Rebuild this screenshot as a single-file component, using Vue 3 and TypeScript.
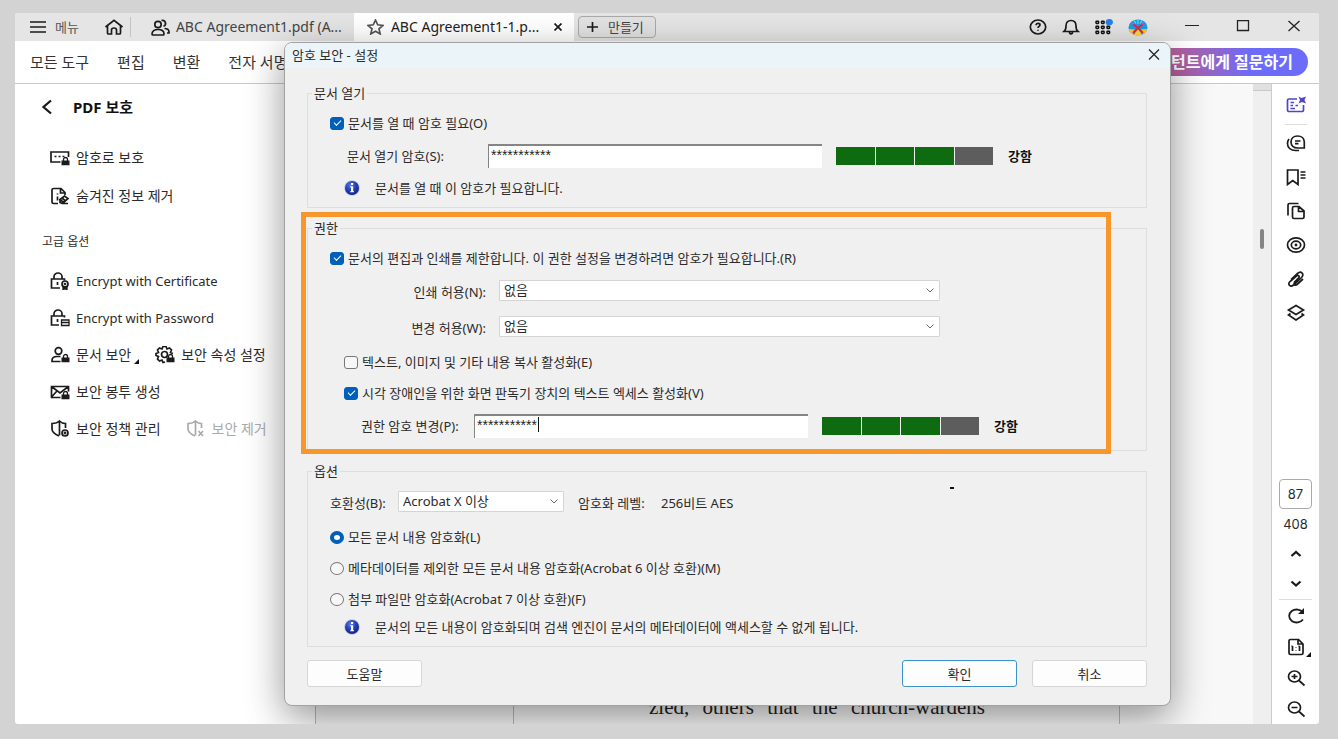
<script setup lang="ts">
import { ref } from 'vue'

interface ToolItem {
  icon: string
  label: string
}

const menus = ['모든 도구', '편집', '변환', '전자 서명']

const basicTools: ToolItem[] = [
  { icon: 'password', label: '암호로 보호' },
  { icon: 'redact', label: '숨겨진 정보 제거' },
]

const railTop: ToolItem[] = [
  { icon: 'comment', label: '댓글' },
  { icon: 'bookmark', label: '책갈피' },
  { icon: 'pages', label: '페이지' },
  { icon: 'target', label: '대상' },
  { icon: 'clip', label: '첨부 파일' },
  { icon: 'layers', label: '레이어' },
]

const railNav: ToolItem[] = [
  { icon: 'up', label: '이전 페이지' },
  { icon: 'down', label: '다음 페이지' },
]

const railView: ToolItem[] = [
  { icon: 'rotate', label: '회전' },
  { icon: 'actual', label: '실제 크기' },
  { icon: 'zoomin', label: '확대' },
  { icon: 'zoomout', label: '축소' },
]

const openRequired = ref(true)
const openPassword = ref('***********')
const restrict = ref(true)
const printing = ref('없음')
const changes = ref('없음')
const copying = ref(false)
const reader = ref(true)
const permPassword = ref('***********')
const compat = ref('Acrobat X 이상')
const scope = ref('all')
const page = ref('87')
const strength = [true, true, true, false]
</script>

<template>
  <div class="desktop">
    <svg class="defs" width="0" height="0" aria-hidden="true">
      <symbol id="lock" viewBox="0 0 8 9">
        <path d="M0 4h8v5H0z" fill="currentColor" stroke="none" />
        <path d="M2 4.500V3a2 2 0 0 1 4 0v1.500" fill="none" stroke="currentColor" stroke-width="1.300" />
      </symbol>
      <symbol id="password" viewBox="0 0 20 18">
        <path d="M10.500 13H1V3h17.500v5" />
        <path d="M4.500 7.500h2M8.500 7.500h2M12.500 7.500h2" />
        <use href="#lock" x="11" y="7.500" width="9" height="9" />
      </symbol>
      <symbol id="redact" viewBox="0 0 20 18">
        <path d="M8 16.500H3.500A1.500 1.500 0 0 1 2 15V3a1.500 1.500 0 0 1 1.500-1.500H11L15 5.500V8M10.500 1.500V6H15" />
        <path d="M7.500 6.500v1M7.500 9.500v4" />
        <path d="M10 12.500l4.500-3.500 3.500 2.500-4.500 4zM12 11l3.500 3M10 12.500v3l2 1h6" />
      </symbol>
      <symbol id="cert" viewBox="0 0 20 18">
        <path d="M10 16H1.500V7H14.500v1.500M4 7V4.500a4 3.500 0 0 1 8 0V7M7.500 10v3" />
        <circle cx="15" cy="12" r="3" /><circle cx="15" cy="12" r="0.500" />
        <path d="M13.200 14.500v3l1.800-1 1.800 1v-3" fill="currentColor" />
      </symbol>
      <symbol id="passdoc" viewBox="0 0 20 18">
        <path d="M9 16H1.500V7H14.500v1.500M4 7V4.500a4 3.500 0 0 1 8 0V7M7.500 10v3" />
        <path d="M11.500 11h7.500v5.500h-7.500zM11.500 13.500h7.500" stroke-width="1.300" />
      </symbol>
      <symbol id="person" viewBox="0 0 20 18">
        <circle cx="8.500" cy="5" r="3.300" />
        <path d="M10.500 10.500H7c-3 0-5 1.500-5 4V15.500h8.500" />
        <use href="#lock" x="11" y="7.500" width="9" height="9" />
      </symbol>
      <symbol id="gear" viewBox="0 0 20 18">
        <path d="M10 16l-2 .500-1-2.500-2.500 1-2-2 1-2.500L1 9.500v-2L3.500 6.500l-1-2.500 2-2L7 3l1-2.500h3L12 3l2.500-1 2 2-1 2.500 2.500 1" />
        <circle cx="9.500" cy="8.500" r="3" />
        <use href="#lock" x="11" y="7.500" width="9" height="9" />
      </symbol>
      <symbol id="envelope" viewBox="0 0 20 18">
        <path d="M10.500 14.500H1.500v-11h17v5M1.500 3.500l8.500 6.500 8.500-6.500M1.500 14l5.500-6" />
        <use href="#lock" x="11" y="7.500" width="9" height="9" />
      </symbol>
      <symbol id="policy" viewBox="0 0 20 18">
        <path d="M9.500 1v14.500M15.500 8V3.500C13 3.500 11 2.500 9.500 1 8 2.500 5 3.500 2 3.500V9c0 3.500 3.500 5.500 7 7" />
        <circle cx="15" cy="13" r="3" /><circle cx="15" cy="13" r="0.600" />
      </symbol>
      <symbol id="unprotect" viewBox="0 0 20 18">
        <path d="M9.500 1v14.500M15.500 8V3.500C13 3.500 11 2.500 9.500 1 8 2.500 5 3.500 2 3.500V9c0 3.500 3.500 5.500 7 7M12.500 11l4.500 5M17 11l-4.500 5" />
      </symbol>

      <symbol id="assist" viewBox="0 0 20 18">
        <path d="M11 3H3a1.500 1.500 0 0 0-1.500 1.500V14A1.500 1.500 0 0 0 3 15.500H16a1.500 1.500 0 0 0 1.500-1.500V9" />
        <path d="M4.500 6.500H8M4.500 9.500H7M4.500 12.500H9M9.500 9.500H12" />
        <path d="M12.500 0.500l3 1.500L20 0.500 18.500 4l1.500 3.500-4-1.500L12.500 7.500 14 4z" fill="currentColor" stroke="none" />
      </symbol>
      <symbol id="comment" viewBox="0 0 20 18">
        <path d="M11.500 2c4 0 6.800 2.500 6.800 6V14h-6.800c-3.800 0-6.500-2.500-6.500-6s2.700-6 6.500-6z" />
        <path d="M3 5C1.800 6.500 1.500 8 1.500 9.500c0 4.500 3.500 7 8 7H13M9 7h5.500M9 9.700h3.500" />
      </symbol>
      <symbol id="bookmark" viewBox="0 0 20 18">
        <path d="M1.500 2h10.500v14.500l-5.200-4-5.300 4zM14.500 4H19.500M14.500 7H19.500M14.500 10H19.500" />
      </symbol>
      <symbol id="pages" viewBox="0 0 20 18">
        <path d="M2 13.500V3A1.500 1.500 0 0 1 3.500 1.500H12.500M13 4.500H8A1.500 1.500 0 0 0 6.500 6V15A1.500 1.500 0 0 0 8 16.500h8.500A1.500 1.500 0 0 0 18 15V9zM12.500 4.500v5h5" />
      </symbol>
      <symbol id="target" viewBox="0 0 20 18">
        <ellipse cx="10" cy="9" rx="8.500" ry="7.200" /><ellipse cx="10" cy="9" rx="4.700" ry="3.800" /><circle cx="10" cy="9" r="0.600" />
      </symbol>
      <symbol id="clip" viewBox="0 0 20 18">
        <path d="M8 12.500l5-5a1.500 1.500 0 0 0-2-2L4 11.500c-3 3 .500 6 3.500 3.500l8-7.500c3.500-3.500-.500-7-4-4L5 9.500M17 9l-6 5.500c-2 1.500-4-.500-2-2.500" />
      </symbol>
      <symbol id="layers" viewBox="0 0 20 18">
        <path d="M10 1.500l7.500 4.500-7.500 4.500L2.500 6zM4.500 9.500l-2 1.500 7.500 5 7.500-5-2-1.500" />
      </symbol>
      <symbol id="up" viewBox="0 0 20 18"><path d="M5.500 11l4.500-4 4.500 4" stroke-width="2.300" /></symbol>
      <symbol id="down" viewBox="0 0 20 18"><path d="M5.500 6.500l4.500 4 4.500-4" stroke-width="2.300" /></symbol>
      <symbol id="rotate" viewBox="0 0 20 18">
        <path d="M17 12.500a7.500 6.500 0 1 1 0-7" stroke-width="1.800" />
        <path d="M18 1v6h-6z" fill="currentColor" stroke="none" />
      </symbol>
      <symbol id="actual" viewBox="0 0 20 18">
        <path d="M12.500 1.500H4.500A1.500 1.500 0 0 0 3 3v12a1.500 1.500 0 0 0 1.500 1.500h11A1.500 1.500 0 0 0 17 15V6zM12 1.500V6h5M6.500 8v5M5.500 8.500l1-.500M13.500 8v5M12.500 8.500l1-.500M10 9v.500M10 12v.500" />
      </symbol>
      <symbol id="zoomin" viewBox="0 0 20 18">
        <ellipse cx="8.500" cy="7.500" rx="6" ry="5.500" /><path d="M13 11.500l5.500 5M5.500 7.500h6M8.500 5v5" />
      </symbol>
      <symbol id="zoomout" viewBox="0 0 20 18">
        <ellipse cx="8.500" cy="7.500" rx="6" ry="5.500" /><path d="M13 11.500l5.500 5M5.500 7.500h6" />
      </symbol>
      <radialGradient id="infoFill" cx="40%" cy="30%" r="75%">
        <stop offset="0" stop-color="#5b7be8" /><stop offset="0.500" stop-color="#2440b8" /><stop offset="1" stop-color="#10207c" />
      </radialGradient>
      <symbol id="info" viewBox="0 0 16 16">
        <circle cx="8" cy="8" r="7.800" fill="#b9c3dc" /><circle cx="8" cy="8" r="7" fill="url(#infoFill)" />
        <path d="M7 3h2.200v2H7zM6.200 6.300h3v5h.800v1H6.200v-1H7V7.300h-.800z" fill="#fff" />
      </symbol>
    </svg>

    <div class="window">
      <header class="titlebar">
        <button class="plain menu" type="button">
          <svg class="icon" width="16" height="12" viewBox="0 0 16 12"><path d="M0 1h16M0 6h16M0 11h16" /></svg>
          메뉴
        </button>
        <button class="plain home" type="button" aria-label="홈">
          <svg class="icon" width="20" height="16" viewBox="0 0 20 16"><path d="M1.500 8L10 1.300 18.500 8M3.500 7v7a1 1 0 0 0 1 1h3v-4a2.500 2 0 0 1 5 0v4h3a1 1 0 0 0 1-1V7" /></svg>
        </button>
        <button class="plain tab" type="button">
          <svg class="icon" width="19" height="17" viewBox="0 0 19 17"><circle cx="7" cy="5.500" r="3.200" /><path d="M7 10.500c-3.500 0-6 1.500-6 4.500 0 .500.300 1 1 1h10c.700 0 1-.500 1-1 0-3-2.500-4.500-6-4.500zM10.500 1.500a3 3 0 1 1 2 5.700M13.500 9.500c2.500 0 4.500 1 4.500 3.500v1h-2" /></svg>
          <span>ABC Agreement1.pdf (A...</span>
        </button>
        <div class="tab active">
          <svg class="icon star" width="17" height="16" viewBox="0 0 17 16"><path d="M8.500 1l2.200 4.800 5.300.600-4 3.500 1.200 5-4.700-2.600-4.700 2.600L5 9.900 1 6.400l5.300-.600z" /></svg>
          <span>ABC Agreement1-1.p...</span>
          <button class="plain tabclose" type="button" aria-label="탭 닫기">
            <svg class="icon" width="8" height="8" viewBox="0 0 8 8"><path d="M.500.500l7 7M7.500.500l-7 7" /></svg>
          </button>
        </div>
        <button class="create" type="button">
          <svg class="icon" width="11" height="10" viewBox="0 0 11 10"><path d="M0 5h11M5.500 0v10" /></svg>
          만들기
        </button>
        <div class="account">
          <button class="plain" type="button" aria-label="도움말">
            <svg class="icon" width="18" height="16" viewBox="0 0 18 16"><ellipse cx="9" cy="8" rx="7.700" ry="7" /><path d="M7 6.300c0-2.600 4-2.300 4-.300 0 1.300-2 1.500-2 3M9 10.800v1" /></svg>
          </button>
          <button class="plain" type="button" aria-label="알림">
            <svg class="icon" width="18" height="16" viewBox="0 0 18 16"><path d="M2 12.500c2-1.500 2-3 2-5.500C4 3.500 6 1.500 9 1.500S14 3.500 14 7c0 2.500 0 4 2 5.500zM7.500 13c0 2.500 3 2.500 3 0" /></svg>
          </button>
          <button class="plain" type="button" aria-label="앱">
            <svg width="18" height="16" viewBox="0 0 18 16"><g fill="none" stroke="#111" stroke-width="1.500"><rect x="1" y="2.200" width="2.600" height="2.200" rx="0.600" /><rect x="6.500" y="2.200" width="2.600" height="2.200" rx="0.600" /><rect x="1" y="7.200" width="2.600" height="2.200" rx="0.600" /><rect x="6.500" y="7.200" width="2.600" height="2.200" rx="0.600" /><rect x="12" y="7.200" width="2.600" height="2.200" rx="0.600" /><rect x="1" y="12.200" width="2.600" height="2.200" rx="0.600" /><rect x="6.500" y="12.200" width="2.600" height="2.200" rx="0.600" /><rect x="12" y="12.200" width="2.600" height="2.200" rx="0.600" /></g><ellipse cx="14.300" cy="3.200" rx="3.600" ry="3.100" fill="#2680eb" /></svg>
          </button>
          <button class="plain" type="button" aria-label="프로필">
            <svg width="20" height="17" viewBox="0 0 20 17"><ellipse cx="10" cy="8.500" rx="9.500" ry="8" fill="#1c9bea" /><path d="M1 10l6 .500L5 15.500C3 14.500 1 12.500 1 10zM19 10l-6 .500 2 5c2-1 4-3 4-5.500z" fill="#ffc928" /><path d="M10 9l-4 7c2 1 6 1 8 0z" fill="#ffd53b" /><path d="M5 5l5 4 5-4M10 9l-5 5M10 9l5 5" fill="none" stroke="#d92b43" stroke-width="2" /><path d="M6 1.500l2 3M10 1v4M14 1.500l-2 3" stroke="#5de0ef" stroke-width="1.200" /><path d="M4.500 4l1.500 1M15.500 4L14 5" stroke="#e04fc0" stroke-width="2" /></svg>
          </button>
        </div>
        <div class="controls">
          <button class="plain" type="button" aria-label="최소화"><svg width="14" height="12" viewBox="0 0 14 12"><path d="M0 5.500h14" stroke="#222" /></svg></button>
          <button class="plain" type="button" aria-label="최대화"><svg width="14" height="12" viewBox="0 0 14 12"><path d="M1.500.500h11v10h-11z" fill="none" stroke="#222" stroke-width="1.300" /></svg></button>
          <button class="plain" type="button" aria-label="닫기"><svg width="14" height="12" viewBox="0 0 14 12"><path d="M1.500 1l11 10M12.500 1l-11 10" stroke="#222" stroke-width="1.300" /></svg></button>
        </div>
      </header>

      <nav class="toolbar">
        <button v-for="m in menus" :key="m" class="plain" type="button">{{ m }}</button>
        <button class="ask" type="button">AI 어시스턴트에게 질문하기</button>
      </nav>

      <div class="body">
        <aside class="tools">
          <h1>
            <button class="plain" type="button" aria-label="뒤로"><svg class="icon" width="12" height="16" viewBox="0 0 12 16"><path d="M10 1.500L2.500 8l7.500 6.500" stroke-width="2.300" /></svg></button>
            PDF 보호
          </h1>
          <div class="list">
            <button v-for="t in basicTools" :key="t.icon" class="plain tool tall" type="button">
              <svg class="icon" width="20" height="18"><use :href="'#' + t.icon" /></svg>{{ t.label }}
            </button>
          </div>
          <h2>고급 옵션</h2>
          <div class="list">
            <button class="plain tool latin" type="button"><svg class="icon" width="20" height="18"><use href="#cert" /></svg>Encrypt with Certificate</button>
            <button class="plain tool latin" type="button"><svg class="icon" width="20" height="18"><use href="#passdoc" /></svg>Encrypt with Password</button>
            <div class="pair">
              <button class="plain tool" type="button">
                <svg class="icon" width="20" height="18"><use href="#person" /></svg>문서 보안
                <svg class="corner" width="5" height="5" viewBox="0 0 5 5"><path d="M5 0v5H0z" /></svg>
              </button>
              <button class="plain tool" type="button"><svg class="icon" width="20" height="18"><use href="#gear" /></svg>보안 속성 설정</button>
            </div>
            <button class="plain tool" type="button"><svg class="icon" width="20" height="18"><use href="#envelope" /></svg>보안 봉투 생성</button>
            <div class="pair wide">
              <button class="plain tool" type="button"><svg class="icon" width="20" height="18"><use href="#policy" /></svg>보안 정책 관리</button>
              <button class="plain tool" type="button" disabled><svg class="icon" width="20" height="18"><use href="#unprotect" /></svg>보안 제거</button>
            </div>
          </div>
        </aside>

        <main class="document">
          <div class="sheet"><p>zled, others that the church-wardens</p></div>
        </main>

        <div class="scroll"><span class="thumbtop"></span><span class="thumb"></span></div>

        <aside class="rail">
          <button class="plain assist" type="button" aria-label="AI 도우미"><svg class="icon" width="20" height="18"><use href="#assist" /></svg></button>
          <hr />
          <button v-for="r in railTop" :key="r.icon" class="plain" type="button" :aria-label="r.label">
            <svg class="icon" width="20" height="18"><use :href="'#' + r.icon" /></svg>
          </button>
          <div class="bottom">
            <input v-model="page" class="page" aria-label="페이지 번호" />
            <span class="total">408</span>
            <button v-for="r in railNav" :key="r.icon" class="plain nav" type="button" :aria-label="r.label">
              <svg class="icon" width="20" height="18"><use :href="'#' + r.icon" /></svg>
            </button>
            <hr />
            <button v-for="r in railView" :key="r.icon" class="plain view" type="button" :aria-label="r.label">
              <svg class="icon" width="20" height="18"><use :href="'#' + r.icon" /></svg>
              <svg v-if="r.icon === 'actual'" class="corner" width="5" height="5" viewBox="0 0 5 5"><path d="M5 0v5H0z" /></svg>
            </button>
          </div>
        </aside>
      </div>

      <form class="dialog" role="dialog" aria-labelledby="dlg-title" @submit.prevent>
        <div class="dlghead">
          <span id="dlg-title">암호 보안 - 설정</span>
          <button class="plain" type="button" aria-label="대화 상자 닫기"><svg width="12" height="11" viewBox="0 0 12 11"><path d="M1 .500l10 10M11 .500l-10 10" stroke="#222" stroke-width="1.200" /></svg></button>
        </div>

        <div class="dlgbody">
          <fieldset>
            <legend>문서 열기</legend>
            <label class="row check"><input v-model="openRequired" type="checkbox" />문서를 열 때 암호 필요(O)</label>
            <div class="row pw first">
              <label for="openpw">문서 열기 암호(S):</label>
              <input id="openpw" v-model="openPassword" type="text" class="secret" />
              <span class="meter"><i v-for="(s, i) in strength" :key="i" :class="{ on: s }"></i></span>
              <strong>강함</strong>
            </div>
            <p class="row note"><svg width="16" height="16"><use href="#info" /></svg>문서를 열 때 이 암호가 필요합니다.</p>
          </fieldset>

          <fieldset>
            <legend>권한</legend>
            <label class="row check"><input v-model="restrict" type="checkbox" />문서의 편집과 인쇄를 제한합니다. 이 권한 설정을 변경하려면 암호가 필요합니다.(R)</label>
            <div class="row combo near">
              <label for="printing">인쇄 허용(N):</label>
              <span class="select"><select id="printing" v-model="printing"><option>없음</option></select><svg width="8" height="5" viewBox="0 0 8 5"><path d="M.500.500L4 4 7.500.500" /></svg></span>
            </div>
            <div class="row combo">
              <label for="changes">변경 허용(W):</label>
              <span class="select"><select id="changes" v-model="changes"><option>없음</option></select><svg width="8" height="5" viewBox="0 0 8 5"><path d="M.500.500L4 4 7.500.500" /></svg></span>
            </div>
            <label class="row check sub apart"><input v-model="copying" type="checkbox" />텍스트, 이미지 및 기타 내용 복사 활성화(E)</label>
            <label class="row check sub"><input v-model="reader" type="checkbox" />시각 장애인을 위한 화면 판독기 장치의 텍스트 엑세스 활성화(V)</label>
            <div class="row pw second">
              <label for="permpw">권한 암호 변경(P):</label>
              <span class="secretbox"><input id="permpw" v-model="permPassword" type="text" class="secret" /><span class="caret"></span></span>
              <span class="meter"><i v-for="(s, i) in strength" :key="i" :class="{ on: s }"></i></span>
              <strong>강함</strong>
            </div>
            <div class="highlight"></div>
          </fieldset>

          <fieldset>
            <legend>옵션</legend>
            <div class="row compat">
              <label for="compat">호환성(B):</label>
              <span class="select"><select id="compat" v-model="compat"><option>Acrobat X 이상</option></select><svg width="8" height="5" viewBox="0 0 8 5"><path d="M.500.500L4 4 7.500.500" /></svg></span>
              <span class="level">암호화 레벨:</span>
              <span class="cipher">256비트 AES</span>
            </div>
            <label class="row check apart"><input v-model="scope" type="radio" name="scope" value="all" />모든 문서 내용 암호화(L)</label>
            <label class="row check"><input v-model="scope" type="radio" name="scope" value="meta" />메타데이터를 제외한 모든 문서 내용 암호화(Acrobat 6 이상 호환)(M)</label>
            <label class="row check"><input v-model="scope" type="radio" name="scope" value="files" />첨부 파일만 암호화(Acrobat 7 이상 호환)(F)</label>
            <p class="row note close"><svg width="16" height="16"><use href="#info" /></svg>문서의 모든 내용이 암호화되며 검색 엔진이 문서의 메타데이터에 액세스할 수 없게 됩니다.</p>
            <span class="speck"></span>
          </fieldset>

          <div class="actions">
            <button type="button">도움말</button>
            <button type="submit" class="primary">확인</button>
            <button type="button">취소</button>
          </div>
        </div>
      </form>
    </div>
  </div>
</template>

<style>
body {
  margin: 0;
  background: #d3d3d3;
}
</style>

<style scoped>
* {
  box-sizing: border-box;
}
.desktop {
  display: flex;
  height: 100vh;
  min-height: 720px;
  padding: 13px 19px 15px 15px;
  background: #d3d3d3;
  color: #2b2b2b;
  font: 14px/20px "Noto Sans", "Noto Sans CJK KR", sans-serif;
}
.defs {
  position: absolute;
}
.window {
  position: relative;
  display: flex;
  flex: 1;
  flex-direction: column;
  min-width: 0;
  overflow: hidden;
  border-radius: 3px;
  background: #fff;
}
button,
input,
select {
  margin: 0;
  color: inherit;
  font: inherit;
}
.plain {
  display: inline-flex;
  align-items: center;
  padding: 0;
  border: 0;
  background: none;
  white-space: nowrap;
}
svg {
  flex: none;
}
.icon {
  fill: none;
  stroke: currentColor;
  stroke-width: 1.7;
  color: #1b1b1b;
}

/* title bar */
.titlebar {
  display: flex;
  flex: none;
  height: 28px;
  background: #e5e5e5;
}
.menu {
  gap: 9px;
  padding-left: 15px;
  font-size: 13px;
  color: #555;
}
.home {
  height: 20px;
  margin: 4px 0;
  padding: 0 6px 0 25px;
  border-right: 1px solid #c4c4c4;
}
.tab {
  display: flex;
  align-items: center;
  gap: 6px;
  width: 223px;
  padding-left: 20px;
  color: #444;
  white-space: nowrap;
}
.tab.active {
  gap: 7px;
  width: 220px;
  padding: 0 12px 0 13px;
  background: #fff;
  color: #222;
}
.star {
  color: #555;
}
.tabclose {
  margin-left: auto;
}
.create {
  display: flex;
  align-items: center;
  gap: 10px;
  width: 78px;
  height: 22px;
  margin: 3px 0 0 4px;
  padding: 0 8px;
  border: 1px solid #aaa;
  border-radius: 4px;
  background: #e2e2e2;
  color: #444;
  font-size: 13px;
  white-space: nowrap;
}
.account {
  display: flex;
  gap: 15px;
  margin-left: auto;
}
.controls {
  display: flex;
  gap: 37px;
  padding: 0 18px 2px 37px;
}

/* menu row */
.toolbar {
  display: flex;
  flex: none;
  align-items: center;
  gap: 28px;
  height: 43px;
  padding: 0 11px 0 15px;
  border-bottom: 1px solid #c8c8c8;
  color: #333;
  font-size: 15px;
}
.ask {
  height: 28px;
  margin-left: auto;
  padding: 0 15px 0 20px;
  border: 0;
  border-radius: 14px;
  background: linear-gradient(90deg, #d9576f 0, #b2609f 42%, #6c6bfa 75%);
  color: #fff;
  font-size: 16px;
  font-weight: 700;
  white-space: nowrap;
}

/* working area */
.body {
  display: flex;
  flex: 1;
  min-height: 0;
}
.tools {
  flex: none;
  width: 300px;
}
h1 {
  display: flex;
  align-items: center;
  gap: 20px;
  height: 46px;
  margin: 0 0 9px;
  padding-left: 26px;
  color: #111;
  font-size: 15px;
  font-weight: 700;
}
h2 {
  height: 24px;
  margin: 15px 0 8px;
  padding-left: 27px;
  font-size: 12px;
  font-weight: 400;
  line-height: 24px;
}
.list {
  display: flex;
  flex-direction: column;
  align-items: flex-start;
  padding-left: 35px;
}
.tool {
  gap: 6px;
  height: 37px;
}
.tool.tall {
  height: 38px;
}
.tool.latin {
  font-size: 13px;
}
.tool:disabled,
.tool:disabled .icon {
  color: #aaa;
}
.pair {
  display: flex;
  gap: 16px;
}
.pair.wide {
  gap: 25px;
}
.corner {
  align-self: flex-end;
  margin: 0 0 9px -3px;
  fill: #111;
}
.document {
  flex: 1;
  padding: 0 133px 0 197px;
  border-left: 1px solid #bbb;
  background: #f8f8f8;
}
.sheet {
  display: flex;
  flex-direction: column;
  justify-content: flex-end;
  height: 100%;
  border: solid #bbb;
  border-width: 0 1px;
}
.sheet p {
  width: 336px;
  margin: 0 0 6px 135px;
  color: #222;
  font: 21px/22px "Liberation Serif", serif;
  text-align-last: justify;
  white-space: nowrap;
}
.scroll {
  display: flex;
  flex: none;
  flex-direction: column;
  align-items: center;
  width: 19px;
  border-right: 1px solid #ccc;
  background: #efefef;
}
.thumbtop {
  width: 100%;
  height: 7px;
  border: 1px solid #c8c8c8;
  border-width: 0 0 1px;
  background: #e0e0e0;
}
.thumb {
  width: 4px;
  height: 20px;
  margin-top: 138px;
  border-radius: 2px;
  background: #858585;
}
.rail {
  display: flex;
  flex: none;
  flex-direction: column;
  align-items: center;
  width: 47px;
  padding-top: 4px;
}
.rail .plain {
  justify-content: center;
  width: 33px;
  height: 34px;
}
.rail .assist .icon {
  color: #4f46c0;
}
hr {
  width: 22px;
  margin: 2px 0 1px;
  border: 0;
  border-top: 1px solid #ddd;
}
.bottom {
  display: flex;
  flex-direction: column;
  align-items: center;
  margin-top: auto;
}
.bottom hr {
  width: 33px;
  margin: 0;
}
.page {
  width: 33px;
  height: 30px;
  padding: 0;
  border: 1px solid #aaa;
  border-radius: 4px;
  background: #fff;
  font: 13px/28px Inter, sans-serif;
  text-align: center;
}
.total {
  font: 13px/30px Inter, sans-serif;
}
.rail .bottom .nav {
  height: 30px;
}
.rail .bottom .view {
  height: 31px;
}
.view .corner {
  margin: 0 -5px 5px 0;
}

/* dialog */
.dialog {
  position: absolute;
  top: 29px;
  right: 148px;
  left: 269px;
  border: 1px solid #a2a2a2;
  border-radius: 8px;
  background: #f0f0f0;
  box-shadow: 0 12px 38px rgba(0, 0, 0, 0.42);
  font-size: 13px;
}
.dlghead {
  display: flex;
  align-items: center;
  justify-content: space-between;
  height: 25px;
  padding: 0 10px 2px 7px;
  border-radius: 7px 7px 0 0;
  background: #ebf4f9;
}
.dlgbody {
  display: flex;
  flex-direction: column;
  gap: 12px;
  padding: 17px 23px 18px 22px;
}
fieldset {
  position: relative;
  min-width: 0;
  margin: 0;
  padding: 0 0 9px;
  border: 1px solid #dedede;
}
fieldset:nth-child(2) {
  padding-bottom: 12px;
}
legend {
  margin-left: 4px;
  padding: 0 2px;
  line-height: 16px;
}
.row {
  display: flex;
  align-items: center;
  height: 24px;
  margin: 7px 0 0;
  white-space: nowrap;
}
legend + .row {
  margin-top: 10px;
}
.check {
  gap: 4px;
  padding-left: 22px;
}
.check.sub {
  padding-left: 36px;
}
.check.apart {
  margin-top: 12px;
}
.check input {
  display: flex;
  align-items: center;
  justify-content: center;
  width: 14px;
  height: 13px;
  border: 1px solid #777;
  border-radius: 3px;
  background: #f7f7f7;
  appearance: none;
}
.check input[type="radio"] {
  border-radius: 50%;
}
.check input:checked {
  border-color: #005fb8;
  background: #005fb8;
}
.check input[type="checkbox"]:checked::before {
  width: 6px;
  height: 3px;
  margin-bottom: 2px;
  border: solid #fff;
  border-width: 0 0 1px 1px;
  content: "";
  transform: rotate(-45deg);
}
.check input[type="radio"]:checked::before {
  width: 6px;
  height: 5px;
  border-radius: 50%;
  background: #fff;
  content: "";
}
.pw {
  margin-top: 9px;
}
.pw.first {
  padding-left: 39px;
}
.pw.first label {
  width: 141px;
}
.pw.second {
  padding-left: 53px;
}
.pw.second label {
  width: 113px;
}
.secret {
  flex: 0 1 334px;
  width: 334px;
  height: 24px;
  min-width: 0;
  padding: 0 0 4px 2px;
  border: solid #858585;
  border-width: 2px 0 0 1px;
  border-radius: 0;
  background: #fff;
  color: #222;
  font: 14px/16px "Liberation Sans", sans-serif;
}
.secretbox {
  position: relative;
  display: flex;
  flex: 0 1 334px;
}
.caret {
  position: absolute;
  top: 3px;
  left: 64px;
  width: 1px;
  height: 15px;
  background: #111;
}
.meter {
  display: flex;
  gap: 1px;
  width: 157px;
  height: 18px;
  margin: 0 15px 0 14px;
}
.meter i {
  flex: 1;
  background: #5d5d5d;
}
.meter .on {
  background: #0f6b0f;
}
strong {
  color: #111;
}
.note {
  height: 20px;
  gap: 15px;
  margin-top: 10px;
  padding-left: 36px;
}
.note.close {
  margin-top: 6px;
}
.combo {
  margin-top: 12px;
}
.combo.near {
  margin-top: 8px;
}
.combo label {
  width: 178px;
  padding-top: 4px;
  text-align: right;
}
.select {
  position: relative;
  display: flex;
  align-items: center;
}
.combo .select {
  flex: 0 1 441px;
  margin-left: 13px;
}
.select select {
  width: 100%;
  height: 21px;
  padding: 0 20px 0 4px;
  border: 1px solid #d4d4d4;
  border-radius: 1px;
  background: #fff;
  line-height: 18px;
  appearance: none;
}
.select svg {
  position: absolute;
  right: 6px;
  fill: none;
  stroke: #666;
}
.compat {
  padding-left: 22px;
}
.compat label {
  width: 68px;
  padding-top: 4px;
}
.compat .select {
  width: 166px;
}
.level,
.cipher {
  padding-top: 4px;
}
.level {
  width: 83px;
  margin-left: 14px;
}
.compat + .check.apart {
  margin-top: 12px;
}
.highlight {
  position: absolute;
  top: -24px;
  right: 35px;
  bottom: -4px;
  left: -7px;
  border: 5px solid #f7962a;
  pointer-events: none;
}
.speck {
  position: absolute;
  top: 8px;
  left: 642px;
  width: 4px;
  height: 2px;
  background: #111;
}
.actions {
  display: flex;
  gap: 15px;
  padding-top: 1px;
}
.actions button {
  width: 115px;
  height: 27px;
  padding: 0;
  border: 1px solid #d6d6d6;
  border-radius: 3px;
  background: #fdfdfd;
}
.actions .primary {
  margin-left: auto;
  border-color: #3c93cc;
}
</style>
